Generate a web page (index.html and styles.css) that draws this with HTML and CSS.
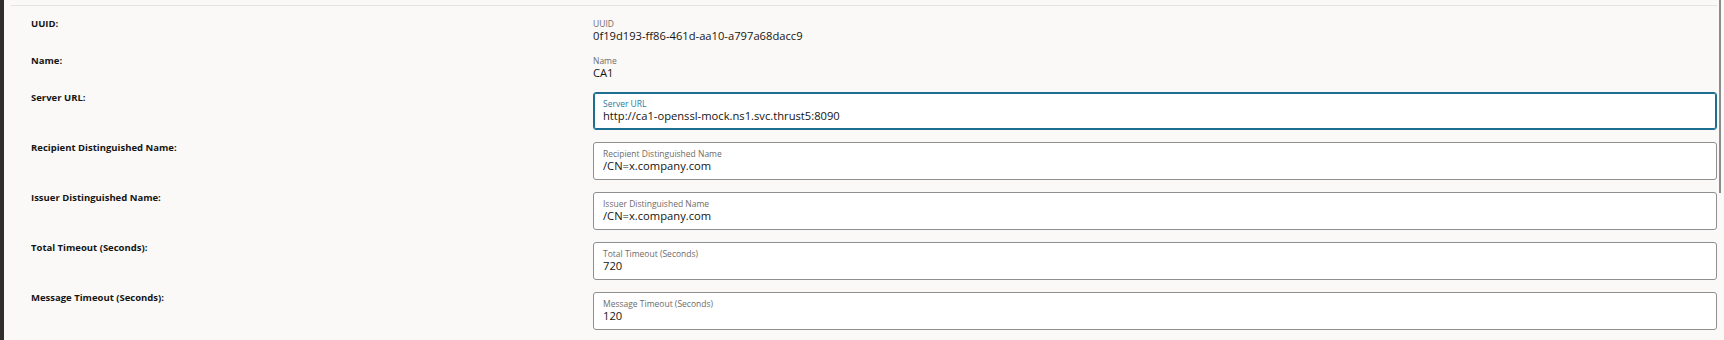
FILE: index.html
```html
<!DOCTYPE html>
<html lang="en">
<head>
<meta charset="utf-8">
<title>CA details</title>
<link rel="stylesheet" href="styles.css">
</head>
<body>
<div class="page">
  <div class="sidebar"></div>
  <div class="main">
    <div class="panel">
      <div class="form">
        <div class="row">
          <div class="row-label">UUID:</div>
          <div class="readonly">
            <div class="field-label">UUID</div>
            <div class="field-value">0f19d193-ff86-461d-aa10-a797a68dacc9</div>
          </div>
        </div>
        <div class="row">
          <div class="row-label">Name:</div>
          <div class="readonly">
            <div class="field-label">Name</div>
            <div class="field-value">CA1</div>
          </div>
        </div>
        <div class="row">
          <div class="row-label">Server URL:</div>
          <div class="input focused">
            <div class="field-label">Server URL</div>
            <div class="field-value">http://ca1-openssl-mock.ns1.svc.thrust5:8090</div>
          </div>
        </div>
        <div class="row">
          <div class="row-label">Recipient Distinguished Name:</div>
          <div class="input">
            <div class="field-label">Recipient Distinguished Name</div>
            <div class="field-value">/CN=x.company.com</div>
          </div>
        </div>
        <div class="row">
          <div class="row-label">Issuer Distinguished Name:</div>
          <div class="input">
            <div class="field-label">Issuer Distinguished Name</div>
            <div class="field-value">/CN=x.company.com</div>
          </div>
        </div>
        <div class="row">
          <div class="row-label">Total Timeout (Seconds):</div>
          <div class="input">
            <div class="field-label">Total Timeout (Seconds)</div>
            <div class="field-value">720</div>
          </div>
        </div>
        <div class="row">
          <div class="row-label">Message Timeout (Seconds):</div>
          <div class="input">
            <div class="field-label">Message Timeout (Seconds)</div>
            <div class="field-value">120</div>
          </div>
        </div>
      </div>
    </div>
    <div class="scroll-thumb"></div>
  </div>
</div>
</body>
</html>
```

FILE: styles.css
```css
html, body {
  margin: 0;
  padding: 0;
  background: #faf9f8;
  font-family: "Open Sans", "Noto Sans", sans-serif;
  color: #161513;
}

.page {
  display: flex;
  height: 340px;
  overflow: hidden;
}

.sidebar {
  width: 4px;
  flex: none;
  background: #312d2a;
}

.main {
  flex: 1;
  position: relative;
  padding: 5px 7px 0 7px;
}

.panel {
  border-top: 1px solid #e5e4e2;
}

.form {
  display: flex;
  flex-direction: column;
  gap: 12px;
  padding: 12px 0 0 20px;
}

.row {
  display: grid;
  grid-template-columns: 562px 1fr;
  align-items: start;
}

.row-label {
  font-size: 9.5px;
  font-weight: 700;
  line-height: 12px;
  color: #161513;
}

.readonly {
  display: flex;
  flex-direction: column;
}

.readonly .field-value {
  line-height: 14px;
}

.field-label {
  font-size: 8.5px;
  line-height: 11px;
  color: #6f6c69;
}

.field-value {
  font-size: 11.2px;
  line-height: 13px;
  color: #161513;
  white-space: nowrap;
}

.input {
  box-sizing: border-box;
  height: 38px;
  background: #ffffff;
  border: 1px solid #8f8f8f;
  border-radius: 3px;
  padding: 5px 9px 0 9px;
}

.input.focused {
  border-color: #1d6f92;
  box-shadow: inset 0 0 0 1px #1d6f92;
}

.input.focused .field-label {
  color: #2a7ca1;
}

.scroll-thumb {
  position: absolute;
  top: 0;
  right: 3px;
  width: 2px;
  height: 193px;
  background: #8c8c8c;
}
```
